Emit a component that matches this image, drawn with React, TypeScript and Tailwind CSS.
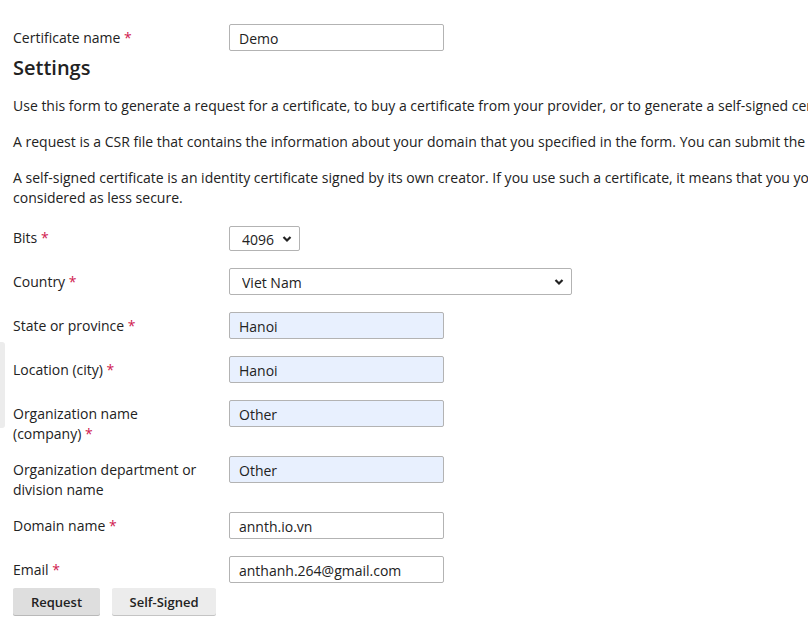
import React from "react";

const Req = () => <span className="text-[#d0204f]"> *</span>;

const Chevron = () => (
  <svg
    width="10"
    height="7"
    viewBox="0 0 10 7"
    className="absolute top-1/2 -translate-y-1/2 right-[8px] pointer-events-none"
  >
    <path d="M1.5 1.5 L5 5 L8.5 1.5" fill="none" stroke="#222" strokeWidth="2.2" />
  </svg>
);

const TextField = ({ value, filled }: { value: string; filled?: boolean }) => (
  <input
    readOnly
    value={value}
    className={`w-[215px] h-[27px] border border-[#b3b3b3] rounded-[2px] px-[9px] pt-[2px] text-[14px] text-[#222] outline-none ${
      filled ? "bg-[#e8f0fe]" : "bg-white"
    }`}
  />
);

const fields = [
  { label: "State or province", required: true, value: "Hanoi", filled: true, tall: false },
  { label: "Location (city)", required: true, value: "Hanoi", filled: true, tall: false },
  { label: "Organization name (company)", required: true, value: "Other", filled: true, tall: true },
  { label: "Organization department or division name", required: false, value: "Other", filled: true, tall: true },
  { label: "Domain name", required: true, value: "annth.io.vn", filled: false, tall: false },
];

export default function App() {
  return (
    <div
      className="relative w-full h-[638px] overflow-hidden bg-white text-[14px] leading-[20px] text-[#222]"
      style={{ fontFamily: '"Open Sans", "Liberation Sans", sans-serif' }}
    >
      {/* collapsed side handle */}
      <div className="absolute left-0 top-[342px] w-[5px] h-[86px] bg-[#ececec] rounded-r-[3px]" />

      <div className="w-[1000px] pl-[13px] pt-[24px]">
        {/* certificate name */}
        <div className="flex items-start">
          <label className="w-[216px] pt-[4px]">
            Certificate name
            <Req />
          </label>
          <TextField value="Demo" />
        </div>

        <h2 className="mt-[5px] text-[20px] leading-[24px] font-semibold">Settings</h2>

        <div className="mt-[16px] flex flex-col gap-[16px] whitespace-nowrap">
          <p>
            Use this form to generate a request for a certificate, to buy a certificate from your provider, or to
            generate a self-signed certificate.
          </p>
          <p>
            A request is a CSR file that contains the information about your domain that you specified in the form. You
            can submit the request to a certification authority.
          </p>
          <p>
            A self-signed certificate is an identity certificate signed by its own creator. If you use such a
            certificate, it means that you yourself vouch for your identity. Self-signed certificates are
            <br />
            considered as less secure.
          </p>
        </div>

        {/* bits */}
        <div className="mt-[16px] h-[44px] flex items-start">
          <label className="w-[216px] pt-[4px]">
            Bits
            <Req />
          </label>
          <div className="relative mt-[2px]">
            <select className="appearance-none w-[71px] h-[25px] border border-[#b3b3b3] rounded-[2px] bg-white pl-[12px] pt-[3px] text-[14px] text-[#222] outline-none">
              <option>4096</option>
            </select>
            <Chevron />
          </div>
        </div>

        {/* country */}
        <div className="h-[44px] flex items-start">
          <label className="w-[216px] pt-[4px]">
            Country
            <Req />
          </label>
          <div className="relative">
            <select className="appearance-none w-[343px] h-[27px] border border-[#b3b3b3] rounded-[2px] bg-white pl-[12px] pt-[3px] text-[14px] text-[#222] outline-none">
              <option>Viet Nam</option>
            </select>
            <Chevron />
          </div>
        </div>

        {fields.map((f) => (
          <div key={f.label} className={`flex items-start ${f.tall ? "h-[56px]" : "h-[44px]"}`}>
            <label className="w-[216px] pt-[4px] pr-[30px]">
              {f.label}
              {f.required && <Req />}
            </label>
            <TextField value={f.value} filled={f.filled} />
          </div>
        ))}

        {/* email */}
        <div className="h-[32px] flex items-start">
          <label className="w-[216px] pt-[4px]">
            Email
            <Req />
          </label>
          <TextField value="anthanh.264@gmail.com" />
        </div>

        <div className="flex gap-[12px]">
          <button className="w-[87px] h-[27px] bg-[#dedede] rounded-[2px] shadow-[0_1px_0_#b9b9b9] text-[13px] font-semibold text-[#222]">
            Request
          </button>
          <button className="w-[104px] h-[27px] bg-[#ececec] rounded-[2px] shadow-[0_1px_0_#c4c4c4] text-[13px] font-semibold text-[#222]">
            Self-Signed
          </button>
        </div>
      </div>
    </div>
  );
}
